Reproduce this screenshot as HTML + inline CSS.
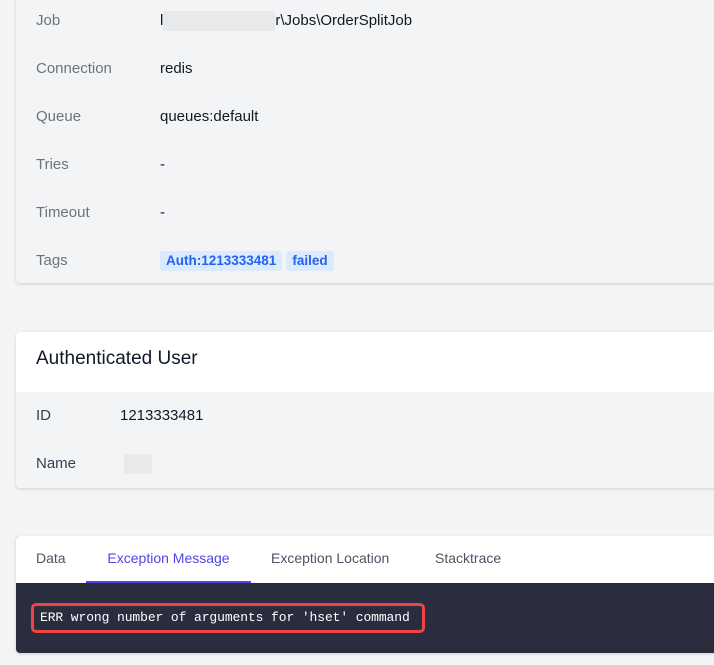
<!DOCTYPE html>
<html><head><meta charset="utf-8"><style>
body{margin:0;width:714px;height:665px;overflow:hidden;background:#f3f4f6;font-family:"Liberation Sans",sans-serif;font-size:15px;color:#111827}
.card{position:absolute;left:16px;width:720px;border-radius:4px;box-shadow:0 1px 3px rgba(0,0,0,.15);overflow:hidden}
.row{position:absolute;left:20px;height:20px;line-height:20px}
.lab{color:#6b7280}
.val{position:absolute;left:124px;white-space:nowrap}
.tag{display:inline-block;background:#dbeafe;color:#2563eb;font-size:13.5px;font-weight:bold;padding:0 6px;height:20px;line-height:20px;border-radius:3px;margin-right:4px}
</style></head><body>
<div class="card" style="top:-10px;height:293px;background:#f3f4f6">
 <div class="row" style="top:21px"><span class="lab">Job</span><span class="val">l<span style="display:inline-block;width:112px;height:20px;background:#e8e9eb;vertical-align:middle"></span>r\Jobs\OrderSplitJob</span></div>
 <div class="row" style="top:69px"><span class="lab">Connection</span><span class="val">redis</span></div>
 <div class="row" style="top:117px"><span class="lab">Queue</span><span class="val">queues:default</span></div>
 <div class="row" style="top:165px"><span class="lab">Tries</span><span class="val">-</span></div>
 <div class="row" style="top:213px"><span class="lab">Timeout</span><span class="val">-</span></div>
 <div class="row" style="top:261px"><span class="lab">Tags</span><span class="val"><span class="tag">Auth:1213333481</span><span class="tag">failed</span></span></div>
</div>
<div class="card" style="top:332px;height:156px;background:#f3f4f6">
 <div style="height:60px;background:#fff;font-size:19px;line-height:54px;padding-left:20px">Authenticated User</div>
 <div class="row" style="top:74px"><span class="lab" style="color:#374151">ID</span><span class="val" style="left:84px">1213333481</span></div>
 <div class="row" style="top:122px"><span class="lab" style="color:#374151">Name</span><span class="val" style="left:88px"><span style="display:inline-block;width:28px;height:20px;background:#e8e9eb;vertical-align:middle"></span></span></div>
</div>
<div class="card" style="top:536px;height:117px;background:#2a2d3e">
 <div style="height:47px;background:#fff;position:relative;font-size:14px;color:#4b5563">
  <span style="position:absolute;left:20px;top:14px">Data</span>
  <span style="position:absolute;left:70px;top:0;width:165px;height:45px;border-bottom:2px solid #4f46e5;color:#4f46e5;text-align:center;line-height:44px">Exception Message</span>
  <span style="position:absolute;left:255px;top:14px">Exception Location</span>
  <span style="position:absolute;left:419px;top:14px">Stacktrace</span>
 </div>
 <div style="position:absolute;left:15px;top:67px;width:394px;height:30px;border:3px solid #ef4444;border-radius:5px;box-sizing:border-box;color:#fff;font-family:'Liberation Mono',monospace;font-size:13px;line-height:24px;padding-left:6px;white-space:nowrap;letter-spacing:-0.1px">ERR wrong number of arguments for 'hset' command</div>
</div>
</body></html>
